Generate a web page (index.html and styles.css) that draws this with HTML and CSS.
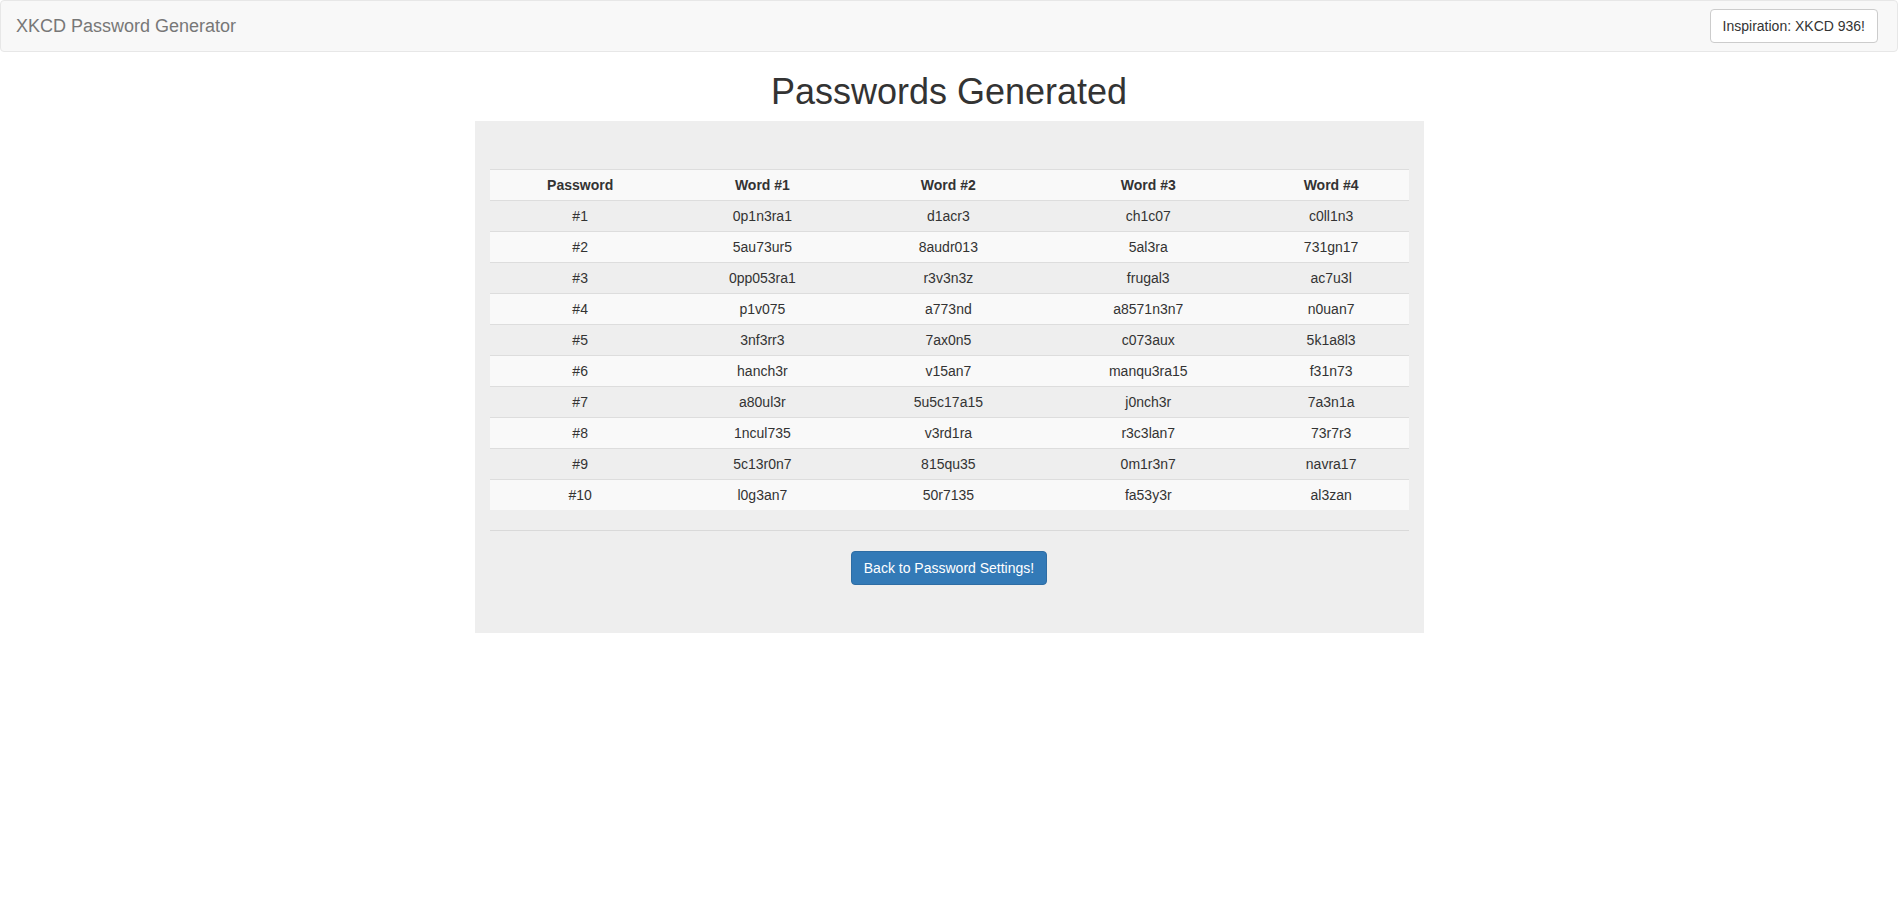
FILE: index.html
```html
<!DOCTYPE html>
<html>
<head>
<meta charset="utf-8">
<title>XKCD Password Generator</title>
<link rel="stylesheet" href="styles.css">
</head>
<body>
<nav class="navbar">
  <a class="brand" href="#">XKCD Password Generator</a>
  <a class="btn btn-default" href="#">Inspiration: XKCD 936!</a>
</nav>
<h1 class="title">Passwords Generated</h1>
<div class="panel">
  <table class="pw-table">
    <tbody>
      <tr><th>Password</th><th>Word #1</th><th>Word #2</th><th>Word #3</th><th>Word #4</th></tr>
      <tr><td>#1</td><td>0p1n3ra1</td><td>d1acr3</td><td>ch1c07</td><td>c0ll1n3</td></tr>
      <tr><td>#2</td><td>5au73ur5</td><td>8audr013</td><td>5al3ra</td><td>731gn17</td></tr>
      <tr><td>#3</td><td>0pp053ra1</td><td>r3v3n3z</td><td>frugal3</td><td>ac7u3l</td></tr>
      <tr><td>#4</td><td>p1v075</td><td>a773nd</td><td>a8571n3n7</td><td>n0uan7</td></tr>
      <tr><td>#5</td><td>3nf3rr3</td><td>7ax0n5</td><td>c073aux</td><td>5k1a8l3</td></tr>
      <tr><td>#6</td><td>hanch3r</td><td>v15an7</td><td>manqu3ra15</td><td>f31n73</td></tr>
      <tr><td>#7</td><td>a80ul3r</td><td>5u5c17a15</td><td>j0nch3r</td><td>7a3n1a</td></tr>
      <tr><td>#8</td><td>1ncul735</td><td>v3rd1ra</td><td>r3c3lan7</td><td>73r7r3</td></tr>
      <tr><td>#9</td><td>5c13r0n7</td><td>815qu35</td><td>0m1r3n7</td><td>navra17</td></tr>
      <tr><td>#10</td><td>l0g3an7</td><td>50r7135</td><td>fa53y3r</td><td>al3zan</td></tr>
    </tbody>
  </table>
  <hr class="divider">
  <div class="actions">
    <a class="btn btn-primary" href="#">Back to Password Settings!</a>
  </div>
</div>
</body>
</html>
```

FILE: styles.css
```css
* { box-sizing: border-box; }
html, body { margin: 0; padding: 0; }
body {
  font-family: "Liberation Sans", Arial, Helvetica, sans-serif;
  font-size: 14px;
  line-height: 1.42857143;
  color: #333;
  background: #fff;
}
a { text-decoration: none; }

.navbar {
  display: flex;
  align-items: flex-start;
  justify-content: space-between;
  min-height: 52px;
  background: #f8f8f8;
  border: 1px solid #e7e7e7;
  border-radius: 4px;
  padding: 0 19px 0 0;
}
.brand {
  display: block;
  padding: 15px;
  font-size: 18px;
  line-height: 20px;
  height: 50px;
  color: #777;
}
.btn {
  display: inline-block;
  padding: 6px 12px;
  font-size: 14px;
  line-height: 20px;
  border: 1px solid transparent;
  border-radius: 4px;
  white-space: nowrap;
  text-align: center;
}
.btn-default {
  margin-top: 8px;
  color: #333;
  background: #fff;
  border-color: #ccc;
}
.btn-primary {
  color: #fff;
  background: #337ab7;
  border-color: #2e6da4;
}

.title {
  margin: 20px 0 10px;
  font-size: 36px;
  font-weight: 500;
  line-height: 39px;
  text-align: center;
  color: #333;
}

.panel {
  width: 949px;
  margin: 0 auto;
  background: #eee;
  padding: 48px 15px 48px;
}
.pw-table {
  width: 100%;
  border-collapse: collapse;
  border-spacing: 0;
  margin-bottom: 20px;
}
.pw-table th,
.pw-table td {
  padding: 5px;
  line-height: 20px;
  text-align: center;
  border-top: 1px solid #ddd;
  vertical-align: top;
}
.pw-table th { font-weight: bold; }
.pw-table tr:nth-of-type(odd) { background: #f9f9f9; }

.divider {
  margin: 20px 0;
  border: 0;
  border-top: 1px solid #d9d9d9;
  height: 0;
}
.actions {
  display: flex;
  justify-content: center;
}
```
